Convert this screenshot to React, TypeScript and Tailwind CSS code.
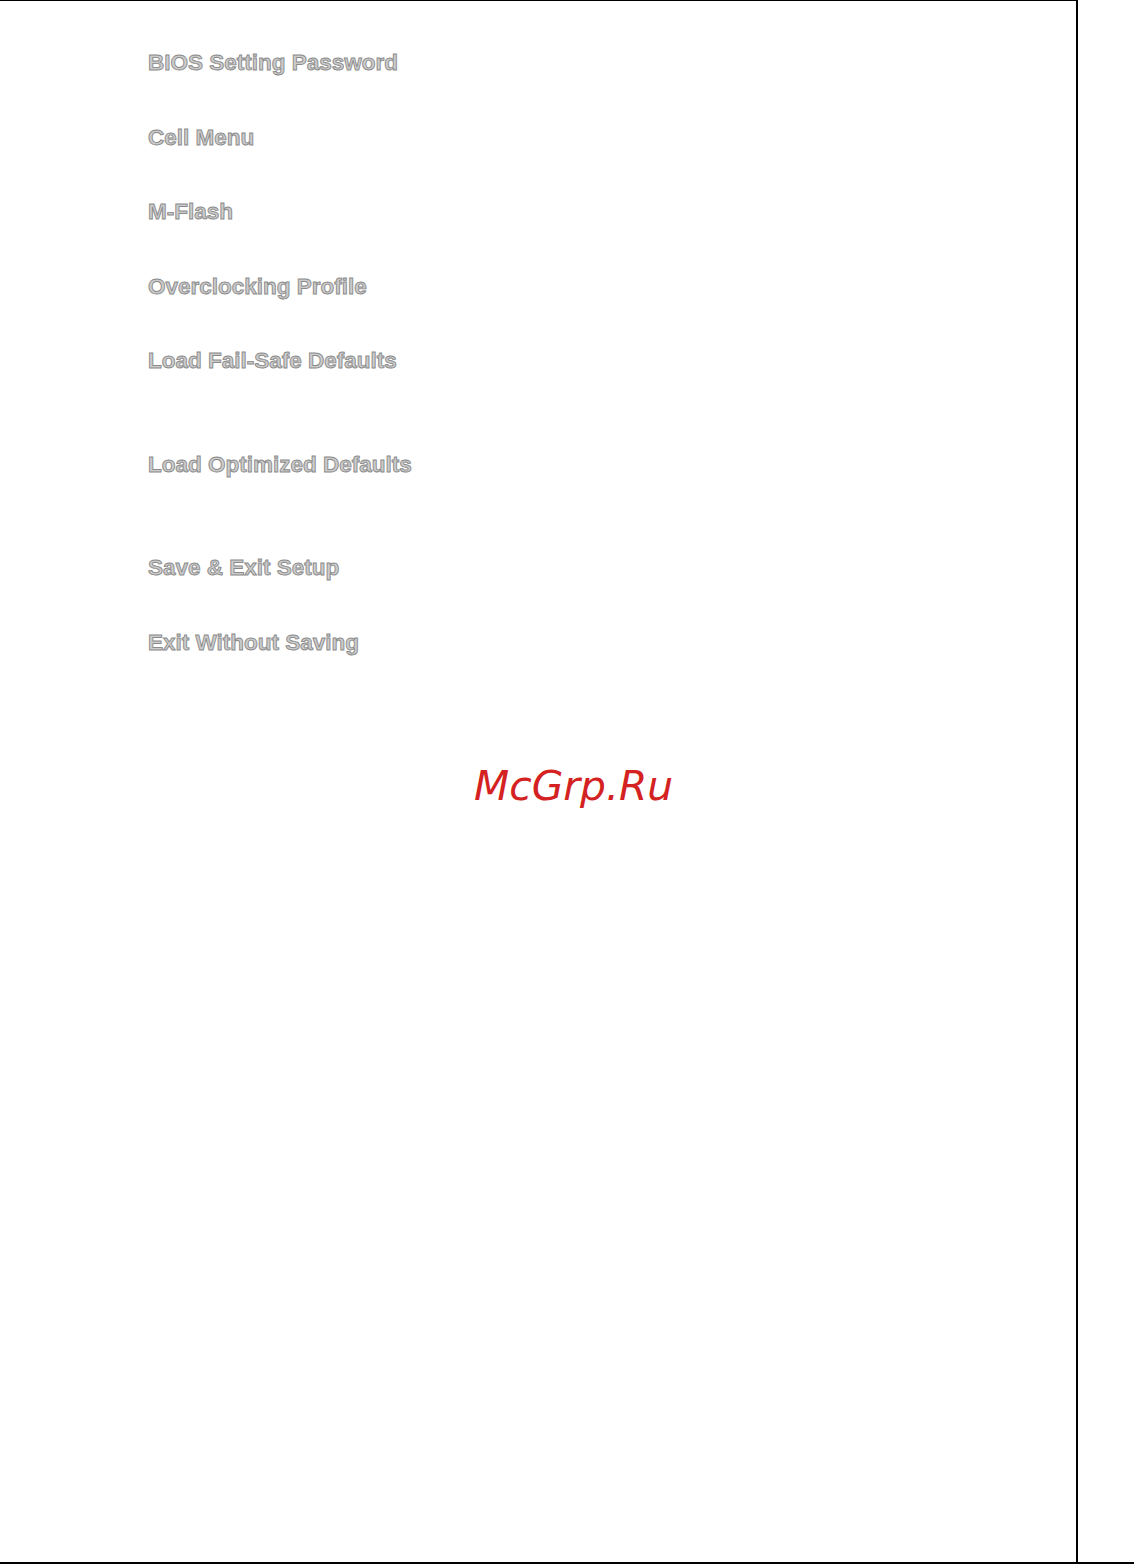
import React from 'react';

const items = [
  { label: 'BIOS Setting Password', gap: 'mt-[47px]' },
  { label: 'Cell Menu', gap: 'mt-[45px]' },
  { label: 'M-Flash', gap: 'mt-[44px]' },
  { label: 'Overclocking Profile', gap: 'mt-[45px]' },
  { label: 'Load Fail-Safe Defaults', gap: 'mt-[44px]' },
  { label: 'Load Optimized Defaults', gap: 'mt-[74px]' },
  { label: 'Save & Exit Setup', gap: 'mt-[73px]' },
  { label: 'Exit Without Saving', gap: 'mt-[45px]' },
];

const App = () => {
  return (
    <div className="w-[1134px] h-[1564px] bg-white border-b-2 border-black">
      <div className="w-[1078px] h-full border-t border-r-2 border-black flex flex-col">
        <ul className="pl-[148px]">
          {items.map((item) => (
            <li
              key={item.label}
              className={`${item.gap} h-[30px] leading-[30px] text-[22.5px] font-bold text-[#cccccc] [-webkit-text-stroke:0.9px_#8a8a8a] [font-family:'Liberation_Sans',Arial,sans-serif]`}
            >
              {item.label}
            </li>
          ))}
        </ul>

        <div className="mt-[104px] pl-[474px] h-[48px] leading-[48px] text-[40.8px] italic text-[#d42222] [font-family:'DejaVu_Sans',sans-serif]">
          McGrp.Ru
        </div>
      </div>
    </div>
  );
};

export default App;
